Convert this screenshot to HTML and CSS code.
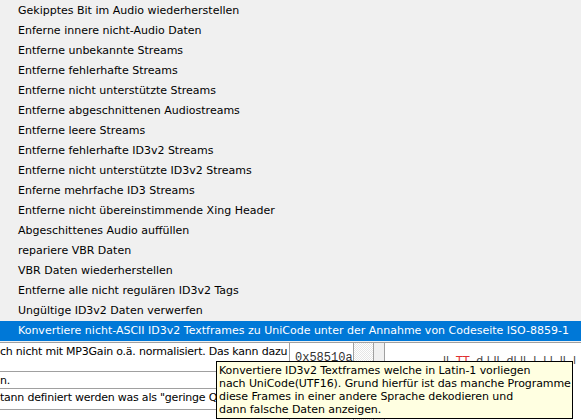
FILE: index.html
```html
<!DOCTYPE html>
<html lang="de">
<head>
<meta charset="utf-8">
<title>Menü</title>
<link rel="stylesheet" href="styles.css">
</head>
<body>
<div class="menu">
  <div class="item">Gekipptes Bit im Audio wiederherstellen</div>
  <div class="item">Enferne innere nicht-Audio Daten</div>
  <div class="item">Entferne unbekannte Streams</div>
  <div class="item">Entferne fehlerhafte Streams</div>
  <div class="item">Entferne nicht unterstützte Streams</div>
  <div class="item">Entferne abgeschnittenen Audiostreams</div>
  <div class="item">Entferne leere Streams</div>
  <div class="item">Entferne fehlerhafte ID3v2 Streams</div>
  <div class="item">Entferne nicht unterstützte ID3v2 Streams</div>
  <div class="item">Enferne mehrfache ID3 Streams</div>
  <div class="item">Entferne nicht übereinstimmende Xing Header</div>
  <div class="item">Abgeschittenes Audio auffüllen</div>
  <div class="item">repariere VBR Daten</div>
  <div class="item">VBR Daten wiederherstellen</div>
  <div class="item">Entferne alle nicht regulären ID3v2 Tags</div>
  <div class="item">Ungültige ID3v2 Daten verwerfen</div>
  <div class="item active">Konvertiere nicht-ASCII ID3v2 Textframes zu UniCode unter der Annahme von Codeseite ISO-8859-1</div>
</div>
<div class="below">
  <div class="grid">
    <div class="row r1"><div class="c1">ch nicht mit MP3Gain o.ä. normalisiert. Das kann dazu</div><div class="c2 mono">0x58510a</div></div>
    <div class="row r2"><div class="c1">n.</div><div class="c2"></div></div>
    <div class="row r3"><div class="c1">tann definiert werden was als "geringe Qualität"</div><div class="c2"></div></div>
    <div class="row r4"><div class="c1"></div><div class="c2"></div></div>
  </div>
  <div class="grip"></div>
  <div class="strip"></div>
  <div class="pane"><span class="faint">ll  <span class="red">TT</span>  d l ll  dl ll  l  l l  ll  l</span></div>
</div>
<div class="tooltip">Konvertiere ID3v2 Textframes welche in Latin-1 vorliegen<br>nach UniCode(UTF16). Grund hierfür ist das manche Programme<br>diese Frames in einer andere Sprache dekodieren und<br>dann falsche Daten anzeigen.</div>
</body>
</html>
```
FILE: styles.css
```css
* { box-sizing: border-box; margin: 0; padding: 0; }
html, body { width: 581px; height: 420px; overflow: hidden; }
body {
  position: relative;
  background: #ffffff;
  font-family: "DejaVu Sans", sans-serif;
  font-size: 11px;
  color: #000;
}
.menu {
  background: #f0f0f0;
  padding: 1px 0 1px 0;
  border-bottom: 1px solid #a0a0a0;
}
.item {
  height: 20px;
  line-height: 20px;
  padding-left: 18px;
  white-space: nowrap;
  overflow: hidden;
}
.item.active {
  background: #0078d7;
  color: #ffffff;
}
.below {
  display: flex;
  height: 77px;
}
.grid {
  width: 354px;
  border-right: 1px solid #a0a0a0;
  display: flex;
  flex-direction: column;
}
.row {
  display: flex;
  border-bottom: 1px solid #a0a0a0;
  white-space: nowrap;
  overflow: hidden;
}
.r1 { height: 29px; }
.r2 { height: 17px; }
.r3 { height: 21px; }
.r4 { flex: 1; border-bottom: none; }
.c1 {
  width: 290px;
  border-right: 1px solid #a0a0a0;
  overflow: hidden;
  line-height: 14px;
  padding-top: 2px;
  letter-spacing: -0.22px;
}
.c2 {
  flex: 1;
  padding: 9px 0 0 5px;
  line-height: 12px;
}
.mono { font-family: "Liberation Mono", monospace; font-size: 12px; color: #333; }
.grip {
  width: 20px;
  border-right: 1px solid #a0a0a0;
  background: repeating-conic-gradient(#e6e6e6 0 25%, #ffffff 0 50%) 0 0 / 2px 2px;
}
.strip {
  width: 11px;
  border-right: 1px solid #a0a0a0;
  background: #f0f0f0;
}
.pane {
  flex: 1;
  padding: 12px 0 0 58px;
  line-height: 12px;
  white-space: pre;
  overflow: hidden;
}
.faint { color: #444; }
.red { color: #e03030; }
.tooltip {
  position: absolute;
  left: 216px;
  top: 361px;
  width: 357px;
  height: 58px;
  background: #ffffe1;
  border: 1px solid #000;
  padding: 2px 2px 0 2px;
  line-height: 13px;
  letter-spacing: -0.07px;
  white-space: nowrap;
  color: #000;
}
```
